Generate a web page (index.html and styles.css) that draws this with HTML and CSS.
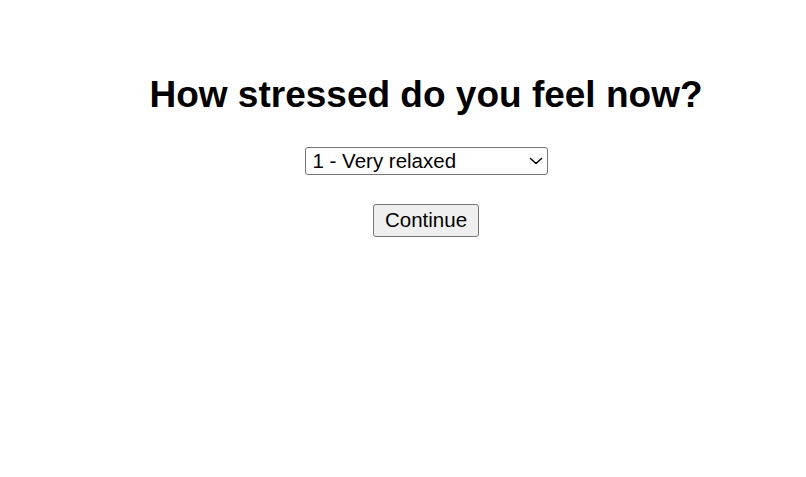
FILE: index.html
```html
<!DOCTYPE html>
<html>
<head>
<meta charset="utf-8">
<link rel="stylesheet" href="styles.css">
</head>
<body>
<main class="page">
  <h1 class="title">How stressed do you feel now?</h1>
  <span class="select-wrap">
    <select class="level">
      <option>1 - Very relaxed</option>
      <option>2 - Relaxed</option>
      <option>3 - Neutral</option>
      <option>4 - Stressed</option>
      <option>5 - Very stressed</option>
    </select>
    <svg class="chevron" width="14" height="8" viewBox="0 0 14 8" aria-hidden="true">
      <path d="M1.5 1.5 L7 6.5 L12.5 1.5" fill="none" stroke="#000" stroke-width="1.5" stroke-linecap="round" stroke-linejoin="round"/>
    </svg>
  </span>
  <button class="continue">Continue</button>
</main>
</body>
</html>
```

FILE: styles.css
```css
html, body {
  margin: 0;
  padding: 0;
  background: #fff;
}
body {
  font-family: "Liberation Sans", Arial, sans-serif;
  color: #000;
}
.page {
  display: flex;
  flex-direction: column;
  align-items: center;
  padding-top: 74px;
  padding-left: 46px;
}
.title {
  margin: 0;
  font-size: 37px;
  font-weight: bold;
  line-height: 42px;
}
.select-wrap {
  position: relative;
  display: block;
  margin-top: 31px;
  width: 243px;
  height: 28px;
}
.level {
  appearance: none;
  -webkit-appearance: none;
  box-sizing: border-box;
  width: 243px;
  height: 28px;
  margin: 0;
  padding: 0 28px 2px 7px;
  border: 1px solid #767676;
  border-radius: 3px;
  background: #fff;
  color: #000;
  font-family: "Liberation Sans", Arial, sans-serif;
  font-size: 20.5px;
}
.chevron {
  position: absolute;
  right: 5px;
  top: 10px;
  pointer-events: none;
}
.continue {
  box-sizing: border-box;
  margin-top: 29px;
  width: 106px;
  height: 33px;
  padding: 0 0 2px;
  border: 1px solid #767676;
  border-radius: 3px;
  background: #efefef;
  color: #000;
  font-family: "Liberation Sans", Arial, sans-serif;
  font-size: 20.5px;
}
```
